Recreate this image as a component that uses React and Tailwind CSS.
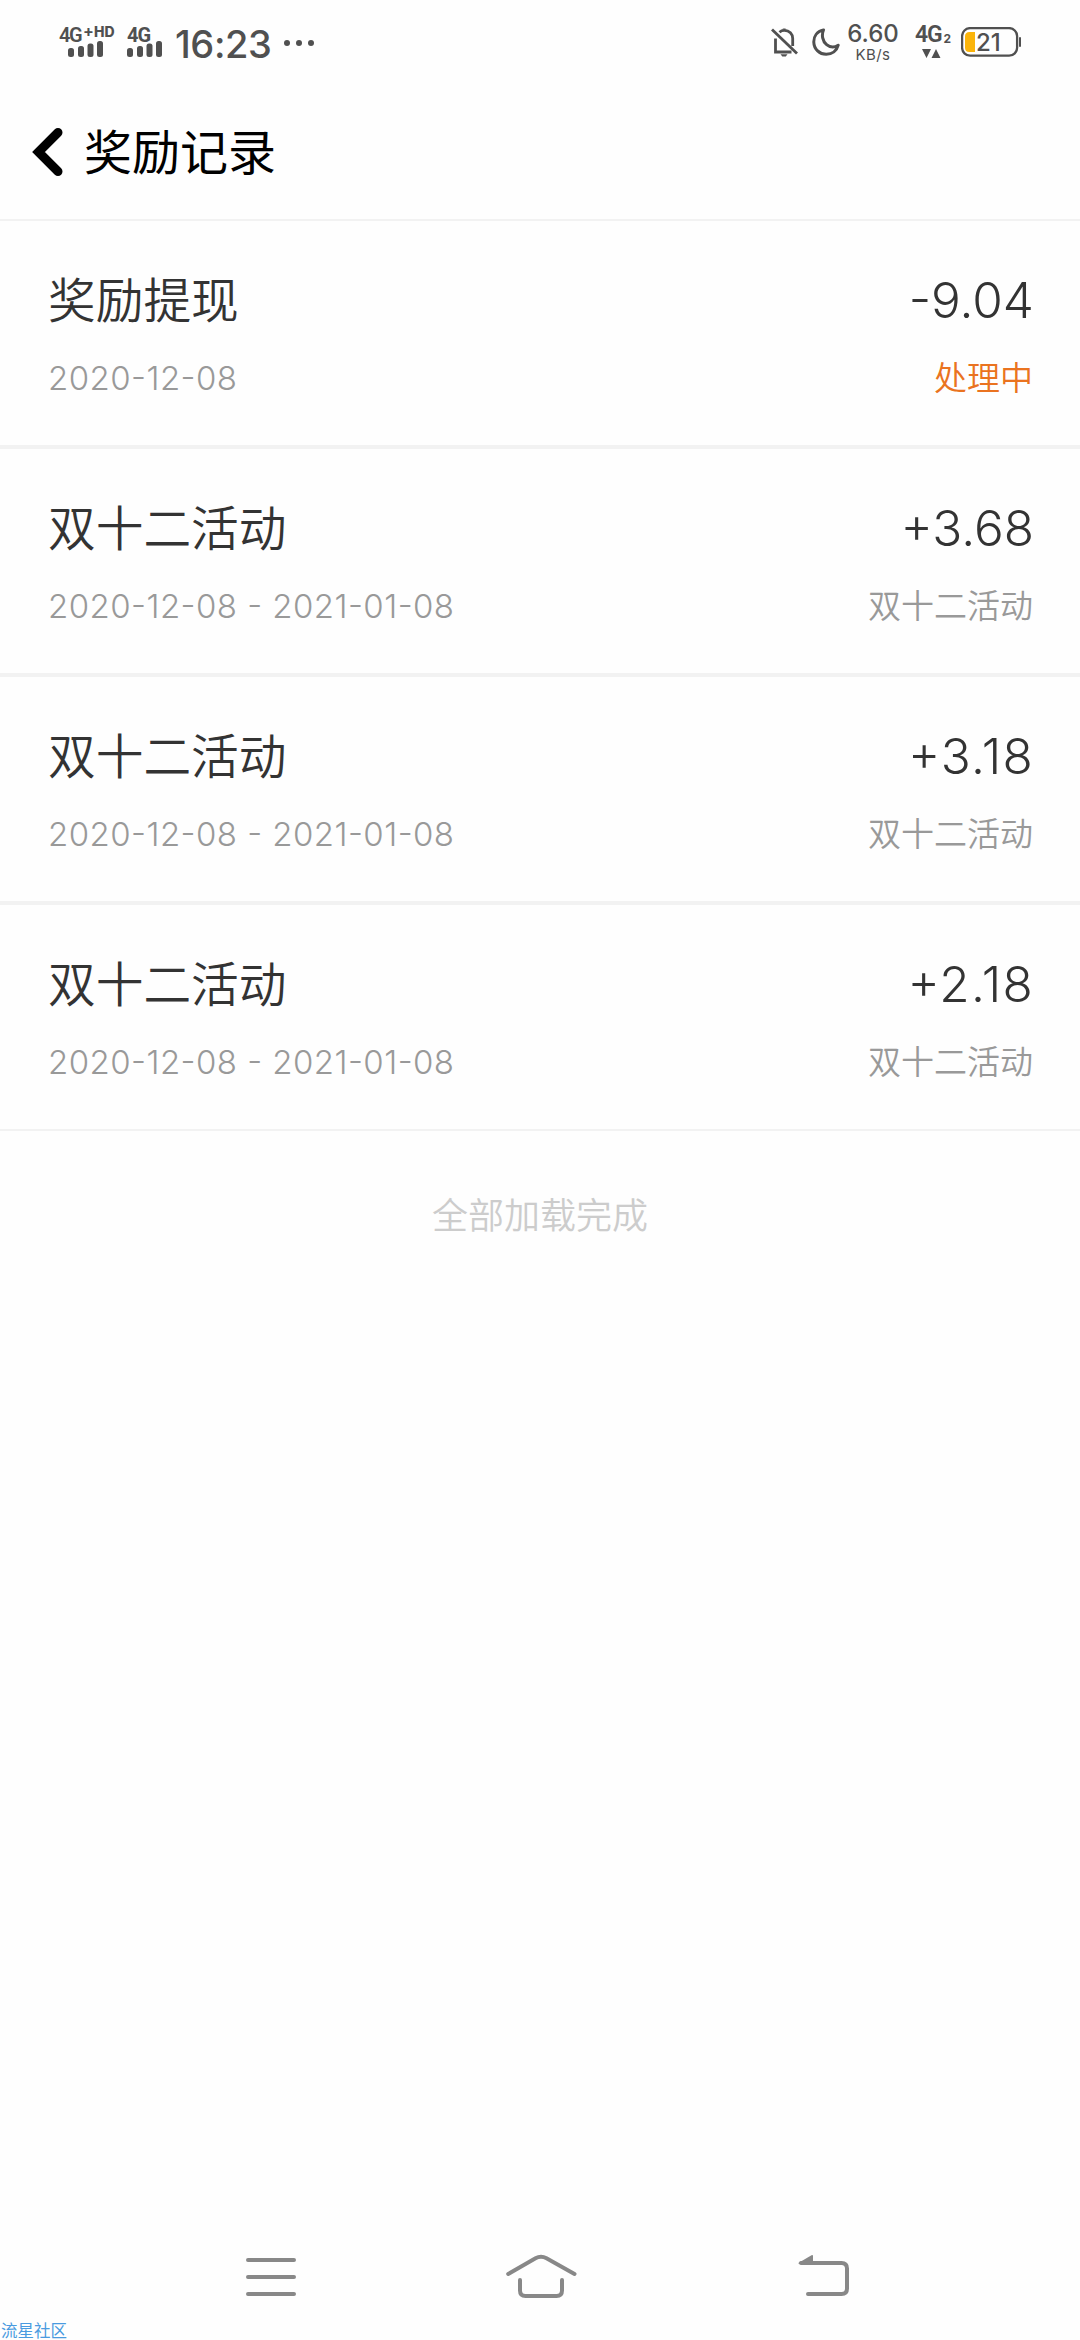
import React from 'react';

const records = [
    { id: 1, title: '奖励提现', date: '2020-12-08', amount: '-9.04', note: '处理中', pending: true },
    { id: 2, title: '双十二活动', date: '2020-12-08 - 2021-01-08', amount: '+3.68', note: '双十二活动' },
    { id: 3, title: '双十二活动', date: '2020-12-08 - 2021-01-08', amount: '+3.18', note: '双十二活动' },
    { id: 4, title: '双十二活动', date: '2020-12-08 - 2021-01-08', amount: '+2.18', note: '双十二活动' },
];

const SignalBars = ({ className }) => (
    <svg className={className} width="36" height="16" viewBox="0 0 36 16" fill="#505050">
        <rect x="0" y="7" width="6" height="9" rx="2.5" />
        <rect x="10" y="5" width="6" height="11" rx="2.5" />
        <rect x="19.5" y="2.5" width="6" height="13.5" rx="2.5" />
        <rect x="29" y="0" width="6" height="16" rx="2.5" />
    </svg>
);

const MutedBell = () => (
    <svg className="mt-[28px] ml-auto" width="28" height="30" viewBox="0 0 28 30" fill="none" stroke="#505050" strokeWidth="2.8">
        <path d="M4.5 10.5V24H20.5" />
        <path d="M8.5 4.2C10 2.8 11.6 2.4 13.3 2.4C18.5 2.4 21.7 6 21.7 10.5V18" />
        <path d="M1 1.5L26 25.5" />
        <path d="M9.5 26.3H16.5L14.8 28.6H11.3Z" fill="#505050" stroke="none" />
        <path d="M11 1.6C11.5 .2 15 .2 15.5 1.6Z" fill="#505050" stroke="none" />
    </svg>
);

const Moon = () => (
    <svg className="mt-[28px] ml-[13px]" width="28" height="30" viewBox="0 0 28 30" fill="none" stroke="#505050" strokeWidth="3" strokeLinejoin="round">
        <path d="M11.5 2C4.8 3.4 1.6 8.6 1.8 14.2C2 21.2 7.6 26.3 14.2 26.3C20 26.3 24.8 22.8 26.2 17.2C22.6 19.6 18 19.4 14.6 16.6C10.4 13.2 9.4 7 11.5 2Z" />
    </svg>
);

const Battery = () => (
    <div className="relative ml-[11px] mt-[27px] h-[30px] w-[60px]">
        <svg width="60" height="30" viewBox="0 0 60 30">
            <rect x="1.1" y="1.1" width="55" height="27.6" rx="8" fill="none" stroke="#505050" strokeWidth="2.3" />
            <path d="M14 5V25H8.5Q4 25 4 20.5V9.5Q4 5 8.5 5Z" fill="#fbb40a" />
            <rect x="58" y="10" width="2" height="10" rx="1" fill="#505050" />
        </svg>
        <span className="absolute left-[15px] top-[1px] text-[24px] leading-[30px] font-medium">21</span>
    </div>
);

const StatusBar = () => (
    <div className="flex h-[84px] items-start pl-[59px] pr-[59px] text-[#505050] font-['Inter',sans-serif]">
        <div className="w-[58px] pt-[26px]">
            <div className="flex h-[15px] items-start font-semibold">
                <span className="w-[24px] text-[20px] leading-[18px] tracking-[-1.5px] font-['Roboto',sans-serif]">4G</span>
                <span className="w-[11px] text-[16px] leading-[10px] font-bold">+</span>
                <span className="text-[14px] leading-[12px] font-extrabold">HD</span>
            </div>
            <SignalBars className="ml-[9px]" />
        </div>
        <div className="ml-[10px] w-[36px] pt-[26px]">
            <div className="h-[15px] text-[20px] leading-[18px] font-bold tracking-[-1px] font-['Roboto',sans-serif]">4G</div>
            <SignalBars />
        </div>
        <span className="ml-[12px] mt-[24px] w-[98px] text-[38px] leading-[40px] font-medium tracking-[-0.4px] whitespace-nowrap">16:23</span>
        <div className="ml-[11px] mt-[40px] flex gap-[6px]">
            <i className="size-[6px] rounded-full bg-[#505050]" />
            <i className="size-[6px] rounded-full bg-[#505050]" />
            <i className="size-[6px] rounded-full bg-[#505050]" />
        </div>
        <MutedBell />
        <Moon />
        <div className="ml-[6px] mt-[22px] flex w-[54px] flex-col items-center">
            <span className="text-[24px] leading-[24px] font-medium">6.60</span>
            <span className="mt-[1px] text-[15px] leading-[15px] tracking-[0.4px]">KB/s</span>
        </div>
        <div className="ml-[15px] mt-[24px] w-[35px]">
            <div className="flex h-[22px] items-end">
                <span className="text-[23px] leading-[22px] font-semibold tracking-[-1.2px] font-['Roboto',sans-serif]">4G</span>
                <span className="ml-[2px] text-[12px] leading-[14px] font-bold">2</span>
            </div>
            <svg className="ml-[7px] mt-[3px]" width="19" height="9" viewBox="0 0 19 9" fill="#505050">
                <path d="M0 0H9L4.5 9ZM9.5 9H18.5L14 0Z" />
            </svg>
        </div>
        <Battery />
    </div>
);

const RecordRow = ({ record }) => (
    <li className="flex h-[228px] justify-between border-y-2 border-[#f2f2f2] px-[48px] pt-[51px]">
        <div>
            <div className="text-[47.7px] leading-[58px] font-[350] text-[#333]">{record.title}</div>
            <div className="mt-[28px] text-[33px] leading-[40px] tracking-[0.45px] text-[#999] [font-feature-settings:'case']">{record.date}</div>
        </div>
        <div className="text-right">
            <div className={`mr-[-2px] text-[49.5px] leading-[56px] text-[#333] [font-feature-settings:'case'] ${record.amount.includes('1') ? 'tracking-[1.2px]' : ''}`}>{record.amount}</div>
            <div className={`mr-[-1px] mt-[30px] text-[33px] leading-[40px] font-[350] ${record.pending ? 'text-[#ea7320]' : 'text-[#999]'}`}>{record.note}</div>
        </div>
    </li>
);

const App = () => {
    return (
        <div className="flex h-[2340px] w-[1080px] flex-col overflow-hidden bg-[#fefefe]">
            <StatusBar />

            {/* 标题栏 */}
            <header className="flex h-[135px] items-center pl-[31px] font-['Noto_Sans_CJK_SC',sans-serif]">
                <svg width="32" height="50" viewBox="0 0 32 50" fill="none" stroke="#000" strokeWidth="9" strokeLinecap="round" strokeLinejoin="miter">
                    <path d="M27 5.5L7.5 25L27 44.5" />
                </svg>
                <h1 className="ml-[21px] pb-[5px] text-[48px] leading-[56px] text-black">奖励记录</h1>
            </header>

            {/* 记录列表 */}
            <ul className="font-light font-['Inter','Noto_Sans_CJK_SC',sans-serif]">
                {records.map(r => <RecordRow key={r.id} record={r} />)}
            </ul>
            <p className="mt-[62px] text-center text-[36px] leading-[40px] font-[350] text-[#ccc] font-['Noto_Sans_CJK_SC',sans-serif]">全部加载完成</p>

            {/* 系统导航 */}
            <nav className="mt-auto flex h-[72px] shrink-0 items-start pl-[245px] text-[#888]">
                <svg width="52" height="50" viewBox="0 0 52 50" fill="none" stroke="currentColor" strokeWidth="4" strokeLinecap="round">
                    <path d="M3 10H49M3 27H49M3 44H49" />
                </svg>
                <svg className="ml-[208px]" width="72" height="50" viewBox="0 0 72 50" fill="none" stroke="currentColor" strokeWidth="4" strokeLinecap="round">
                    <path d="M3.2 24L30.5 8.2Q36 5.4 41.5 8.2L69.5 24" />
                    <path d="M15 30V40.5Q15 46 20.5 46H51.5Q57 46 57 40.5V30" />
                </svg>
                <svg className="ml-[220px]" width="54" height="50" viewBox="0 0 54 50" fill="none" stroke="currentColor" strokeWidth="4" strokeLinecap="round">
                    <path d="M4 13H44.5Q50 13 50 18.5V38.5Q50 44 44.5 44H11" />
                    <path d="M1.3 13L14.5 5.2Q16 4.6 16 6V14H2Z" fill="currentColor" stroke="none" />
                </svg>
            </nav>
            <footer className="h-[18px] shrink-0 pl-[1px] text-[16.5px] leading-[17px] text-[#4a9be0] font-['Noto_Sans_CJK_SC',sans-serif]">流星社区</footer>
        </div>
    );
};

export default App;
